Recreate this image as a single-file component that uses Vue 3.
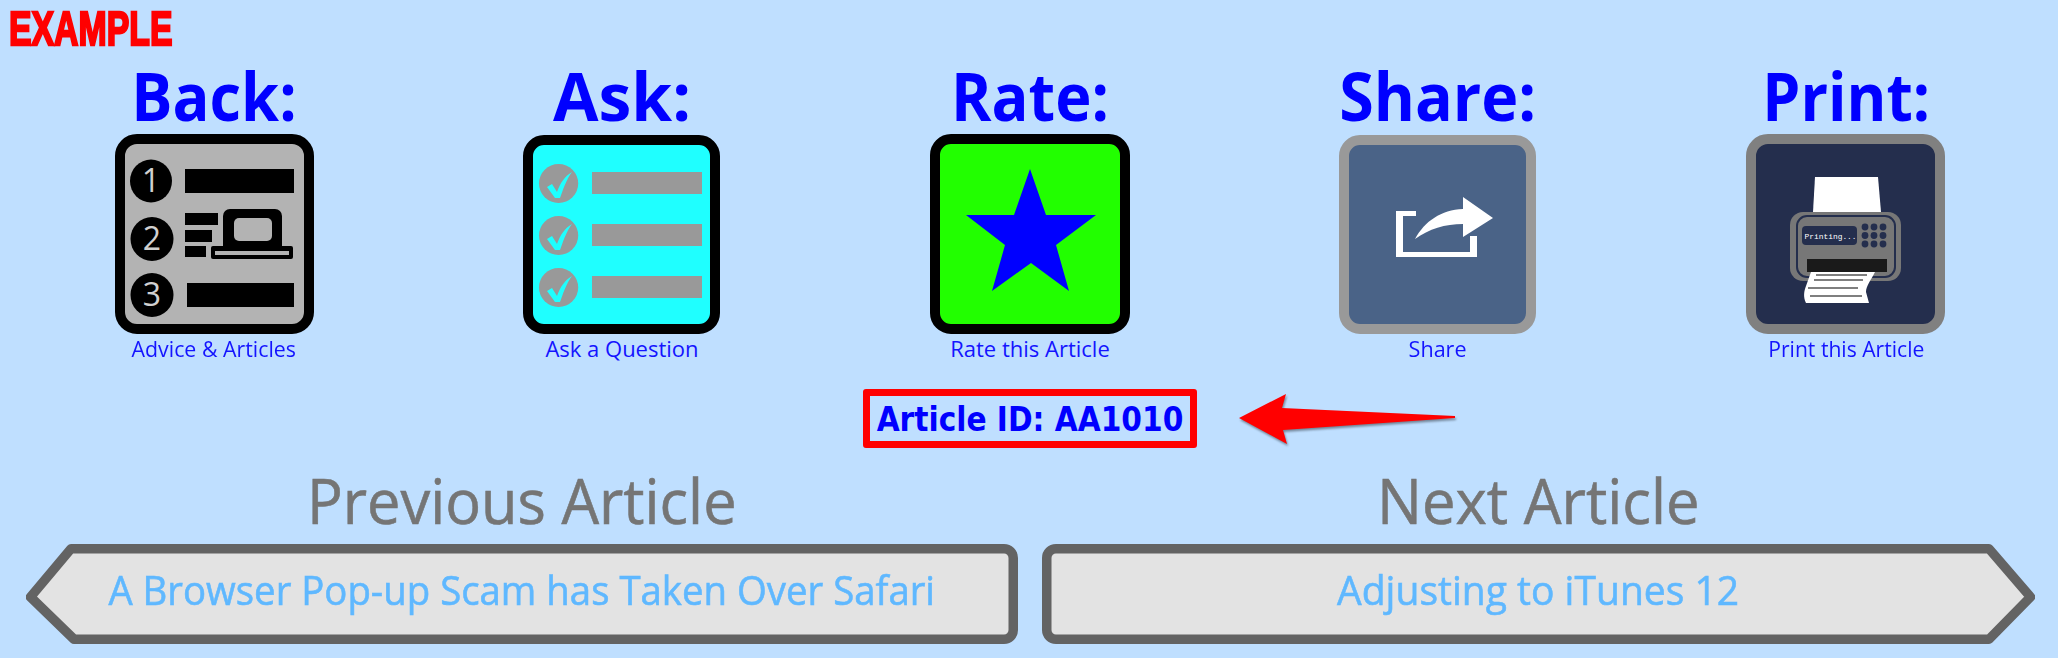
<script setup>
const tools = [
  { key: 'back', title: 'Back:', caption: 'Advice & Articles', fit: 0.93, capFit: 0.97 },
  { key: 'ask', title: 'Ask:', caption: 'Ask a Question', fit: 1, capFit: 1 },
  { key: 'rate', title: 'Rate:', caption: 'Rate this Article', fit: 0.93, capFit: 1 },
  { key: 'share', title: 'Share:', caption: 'Share', fit: 0.95, capFit: 0.98 },
  { key: 'print', title: 'Print:', caption: 'Print this Article', fit: 0.92, capFit: 0.96 },
]
const checks = [0, 52, 104]
const keys = [227, 235.5, 244]
const keyCols = [1866, 1875, 1884]
const scaleX = (value) => ({ transform: `scaleX(${value})` })
</script>

<template>
  <main class="page">
    <div class="example"><span class="example-text">EXAMPLE</span></div>

    <section class="tools">
      <article v-for="tool in tools" :key="tool.key" class="tool">
        <h2 class="tool-title" :style="scaleX(tool.fit)">{{ tool.title }}</h2>

        <svg v-if="tool.key === 'back'" class="icon" viewBox="114 134 200 200">
          <rect x="120" y="139" width="189" height="190" rx="17" fill="#b3b3b3" stroke="#000" stroke-width="10" />
          <ellipse cx="151" cy="181" rx="21" ry="21.5" />
          <ellipse cx="152" cy="239" rx="21.5" ry="22" />
          <ellipse cx="152" cy="295" rx="21.5" ry="22" />
          <text x="151" y="192" class="num">1</text>
          <text x="152" y="249.5" class="num">2</text>
          <text x="152" y="306" class="num">3</text>
          <rect x="185" y="169" width="109" height="24" />
          <rect x="187" y="283" width="107" height="24" />
          <rect x="185" y="213" width="33" height="12" />
          <rect x="185" y="230" width="27" height="12" />
          <rect x="185" y="246" width="21" height="11" />
          <path d="M223 247V216a7 7 0 0 1 7-7h45a7 7 0 0 1 7 7v31z" />
          <rect x="234" y="218" width="38" height="23" rx="5" fill="#b3b3b3" />
          <rect x="211" y="246" width="82" height="13" rx="2" />
          <rect x="215" y="251" width="74" height="4" fill="#b3b3b3" />
        </svg>

        <svg v-else-if="tool.key === 'ask'" class="icon" viewBox="522 134 200 200">
          <rect x="528" y="140" width="187" height="189" rx="16" fill="#1fffff" stroke="#000" stroke-width="10" />
          <g v-for="dy in checks" :key="dy" :transform="`translate(0 ${dy})`">
            <ellipse cx="558.6" cy="183.5" rx="19.6" ry="19.5" fill="#999" />
            <path d="M547 187l5-3 5 8c3-9 8-16 15-20-6 8-9 18-12 26h-5z" fill="#1fffff" />
            <rect x="592" y="172" width="110" height="22" fill="#999" />
          </g>
        </svg>

        <svg v-else-if="tool.key === 'rate'" class="icon" viewBox="930 134 200 200">
          <rect x="935" y="139" width="190" height="190" rx="16" fill="#22ff00" stroke="#000" stroke-width="10" />
          <path d="M1030 169l16 46h50l-40 30 13 46-38-28-39 28 13-46-39-30h48z" fill="#0000ff" />
        </svg>

        <svg v-else-if="tool.key === 'share'" class="icon" viewBox="1338 134 200 200">
          <rect x="1344" y="140" width="187" height="189" rx="16" fill="#4a6387" stroke="#999" stroke-width="10" />
          <path d="M1416 211v5h-13v36h67v-16h7v21h-81v-46z" fill="#fff" />
          <path d="M1415 239c10-18 26-29 48-30v-12l30 21-30 19v-13c-18 0-34 5-48 15z" fill="#fff" />
        </svg>

        <svg v-else class="icon" viewBox="1747 134 200 200">
          <rect x="1752" y="139" width="189" height="190" rx="17" fill="#242e4d" stroke="#808080" stroke-width="10" />
          <path d="M1816 177h63l3 35h-68z" fill="#fff" />
          <rect x="1791" y="212" width="111" height="69" rx="13" fill="#777" />
          <rect x="1798" y="216" width="98" height="61" rx="10" fill="none" stroke="#242e4d" stroke-width="2" />
          <rect x="1803" y="226" width="55" height="19" rx="4" fill="#242e4d" />
          <text x="1805.5" y="238.5" class="lcd">Printing...</text>
          <g v-for="cy in keys" :key="cy">
            <circle v-for="cx in keyCols" :key="cx" :cx="cx" :cy="cy" r="3.4" fill="#242e4d" />
          </g>
          <rect x="1808" y="259" width="80" height="13" fill="#1a1a1a" />
          <path d="M1812 272h64c-4 8-9 14-9 20l3 11h-63c-3-6-2-12 0-17z" fill="#fff" />
          <path d="M1817 275h51M1815 280h49M1809 288h50M1811 296h52" stroke="#555" stroke-width="1.4" fill="none" />
        </svg>

        <p class="tool-caption" :style="scaleX(tool.capFit)">{{ tool.caption }}</p>
      </article>
    </section>

    <section class="article-row">
      <div class="article-id">Article ID: AA1010</div>
      <svg class="pointer" viewBox="1235 389 225 59">
        <path d="M1239 418l47-24-4 14 173 8v2l-172 12 4 14z" fill="#ff0000" />
      </svg>
    </section>

    <section class="nav">
      <div class="nav-col">
        <h3 class="nav-title" :style="scaleX(0.96)">Previous Article</h3>
        <div class="nav-button">
          <svg class="nav-shape" viewBox="26 544 992 100">
            <path d="M71 548.75H1004a9.25 9.25 0 0 1 9.25 9.25v72a9.25 9.25 0 0 1-9.25 9.25H74L30.5 597z" fill="#e3e3e3" stroke="#636363" stroke-width="9.5" stroke-linejoin="round" />
          </svg>
          <span class="nav-text" :style="scaleX(0.94)">A Browser Pop-up Scam has Taken Over Safari</span>
        </div>
      </div>
      <div class="nav-col">
        <h3 class="nav-title" :style="scaleX(0.964)">Next Article</h3>
        <div class="nav-button">
          <svg class="nav-shape" viewBox="1042 544 993 100">
            <path d="M1989 548.75H1056a9.25 9.25 0 0 0-9.25 9.25v72a9.25 9.25 0 0 0 9.25 9.25H1989L2030.5 597z" fill="#e3e3e3" stroke="#636363" stroke-width="9.5" stroke-linejoin="round" />
          </svg>
          <span class="nav-text" :style="scaleX(0.957)">Adjusting to iTunes 12</span>
        </div>
      </div>
    </section>
  </main>
</template>

<style>
html, body { margin: 0; background: #bfdfff; }
</style>

<style scoped>
.page {
  width: 2058px;
  height: 658px;
  overflow: hidden;
  background: #bfdfff;
  font-family: "Open Sans", "Noto Sans", sans-serif;
}
.example {
  box-sizing: border-box;
  height: 56px;
  padding: 1px 0 0 9px;
  white-space: nowrap;
}
.example-text {
  display: inline-block;
  font: 700 49px/55px "Liberation Sans", sans-serif;
  color: #ff0000;
  -webkit-text-stroke: 2.4px #ff0000;
  transform: scaleX(0.69);
  transform-origin: left center;
}
.tools {
  display: grid;
  grid-template-columns: repeat(5, 408px);
  padding-left: 10px;
}
.tool {
  display: flex;
  flex-direction: column;
  align-items: center;
}
.tool-title {
  margin: 0;
  height: 78px;
  font-size: 66px;
  line-height: 78px;
  font-weight: 700;
  color: #0000ff;
}
.icon {
  display: block;
  width: 200px;
  height: 200px;
  fill: #000;
}
.tool-caption {
  margin: 0 0 2px;
  font-size: 22px;
  line-height: 28px;
  color: #1414ff;
}
.num {
  font: 32px "Open Sans", sans-serif;
  fill: #d0d0d0;
  text-anchor: middle;
}
.lcd {
  font: 7.9px "Liberation Mono", monospace;
  fill: #fff;
}
.article-row {
  display: flex;
  align-items: center;
  margin-top: 25px;
  padding-left: 863px;
}
.article-id {
  box-sizing: border-box;
  width: 334px;
  height: 59px;
  padding-top: 2px;
  border: 7px solid #ff0000;
  border-radius: 3px;
  text-align: center;
  white-space: nowrap;
  font: 700 33px/43px "DejaVu Sans", sans-serif;
  font-stretch: condensed;
  color: #0000ff;
}
.pointer {
  width: 225px;
  height: 59px;
  margin-left: 38px;
  filter: drop-shadow(1px 2px 1px rgba(0, 0, 0, 0.4));
}
.nav {
  display: grid;
  grid-template-columns: 992px 993px;
  column-gap: 24px;
  padding-left: 26px;
  margin-top: 14px;
}
.nav-col {
  display: flex;
  flex-direction: column;
}
.nav-title {
  align-self: center;
  margin: 0;
  height: 82px;
  font-size: 62px;
  line-height: 76px;
  font-weight: 400;
  color: #757575;
  -webkit-text-stroke: 0.6px #757575;
}
.nav-button {
  position: relative;
  box-sizing: border-box;
  height: 100px;
  padding-bottom: 10px;
  display: flex;
  align-items: center;
  justify-content: center;
}
.nav-shape {
  position: absolute;
  inset: 0;
  width: 100%;
  height: 100%;
}
.nav-text {
  position: relative;
  font-size: 40.8px;
  white-space: nowrap;
  color: #5fb8ff;
  -webkit-text-stroke: 0.6px #5fb8ff;
}
</style>
